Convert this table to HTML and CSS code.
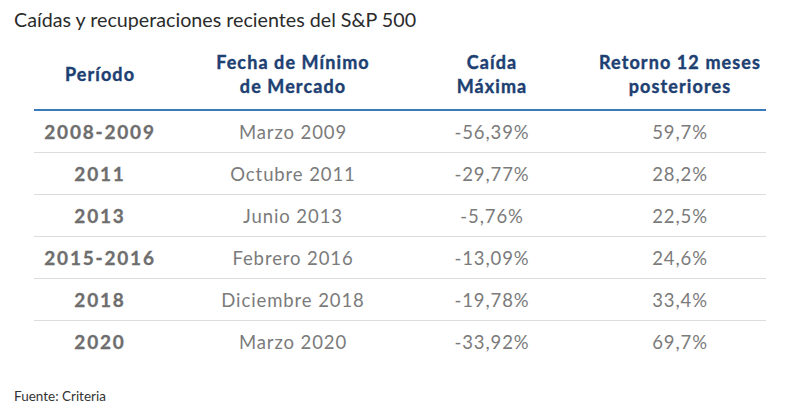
FILE: index.html
```html
<!DOCTYPE html>
<html lang="es">
<head>
<meta charset="utf-8">
<title>Caídas y recuperaciones recientes del S&amp;P 500</title>
<link rel="stylesheet" href="styles.css">
</head>
<body>
<div class="page">
  <h1 class="title">Caídas y recuperaciones recientes del S&amp;P 500</h1>
  <div class="table">
    <div class="row head">
      <div class="cell c1">Período</div>
      <div class="cell c2">Fecha de Mínimo<br>de Mercado</div>
      <div class="cell c3">Caída<br>Máxima</div>
      <div class="cell c4">Retorno 12 meses<br>posteriores</div>
    </div>
    <div class="row">
      <div class="cell c1 year">2008-2009</div>
      <div class="cell c2">Marzo 2009</div>
      <div class="cell c3">-56,39%</div>
      <div class="cell c4">59,7%</div>
    </div>
    <div class="row">
      <div class="cell c1 year">2011</div>
      <div class="cell c2">Octubre 2011</div>
      <div class="cell c3">-29,77%</div>
      <div class="cell c4">28,2%</div>
    </div>
    <div class="row">
      <div class="cell c1 year">2013</div>
      <div class="cell c2">Junio 2013</div>
      <div class="cell c3">-5,76%</div>
      <div class="cell c4">22,5%</div>
    </div>
    <div class="row">
      <div class="cell c1 year">2015-2016</div>
      <div class="cell c2">Febrero 2016</div>
      <div class="cell c3">-13,09%</div>
      <div class="cell c4">24,6%</div>
    </div>
    <div class="row">
      <div class="cell c1 year">2018</div>
      <div class="cell c2">Diciembre 2018</div>
      <div class="cell c3">-19,78%</div>
      <div class="cell c4">33,4%</div>
    </div>
    <div class="row last">
      <div class="cell c1 year">2020</div>
      <div class="cell c2">Marzo 2020</div>
      <div class="cell c3">-33,92%</div>
      <div class="cell c4">69,7%</div>
    </div>
  </div>
  <p class="source">Fuente: Criteria</p>
</div>
</body>
</html>
```
FILE: styles.css
```css
html, body {
  margin: 0;
  padding: 0;
  background: #ffffff;
}
.page {
  width: 800px;
  height: 408px;
  overflow: hidden;
  font-family: Lato, "Liberation Sans", sans-serif;
  padding: 8px 0 0 0;
  box-sizing: border-box;
}
.title {
  margin: 0 0 0 14px;
  font-size: 19.7px;
  font-weight: 400;
  color: #2b2b2b;
  line-height: 24px;
}
.table {
  margin: 18px 0 0 34px;
  width: 732px;
}
.row {
  display: grid;
  grid-template-columns: 132px 254px 174px 172px;
  height: 41px;
  align-items: center;
  border-bottom: 1px solid #dcdcdc;
  font-size: 18.5px;
  color: #7b7b7b;
  letter-spacing: 0.9px;
}
.row.head {
  height: 47px;
  padding-bottom: 12px;
  border-bottom: 2px solid #3b7bbb;
  color: #1d3f72;
  font-weight: 700;
  font-size: 18px;
  line-height: 24px;
  letter-spacing: 1.1px;
  -webkit-text-stroke: 0.4px #1d3f72;
}
.row.last {
  border-bottom: none;
}
.cell {
  text-align: center;
}
.c3 {
  padding-right: 30px;
}
.year {
  font-weight: 700;
  color: #6e6e6e;
  font-size: 19px;
  letter-spacing: 1.8px;
  -webkit-text-stroke: 0.3px #6e6e6e;
}
.source {
  margin: 27px 0 0 14px;
  font-size: 13.5px;
  line-height: 14px;
  color: #333333;
}
```
